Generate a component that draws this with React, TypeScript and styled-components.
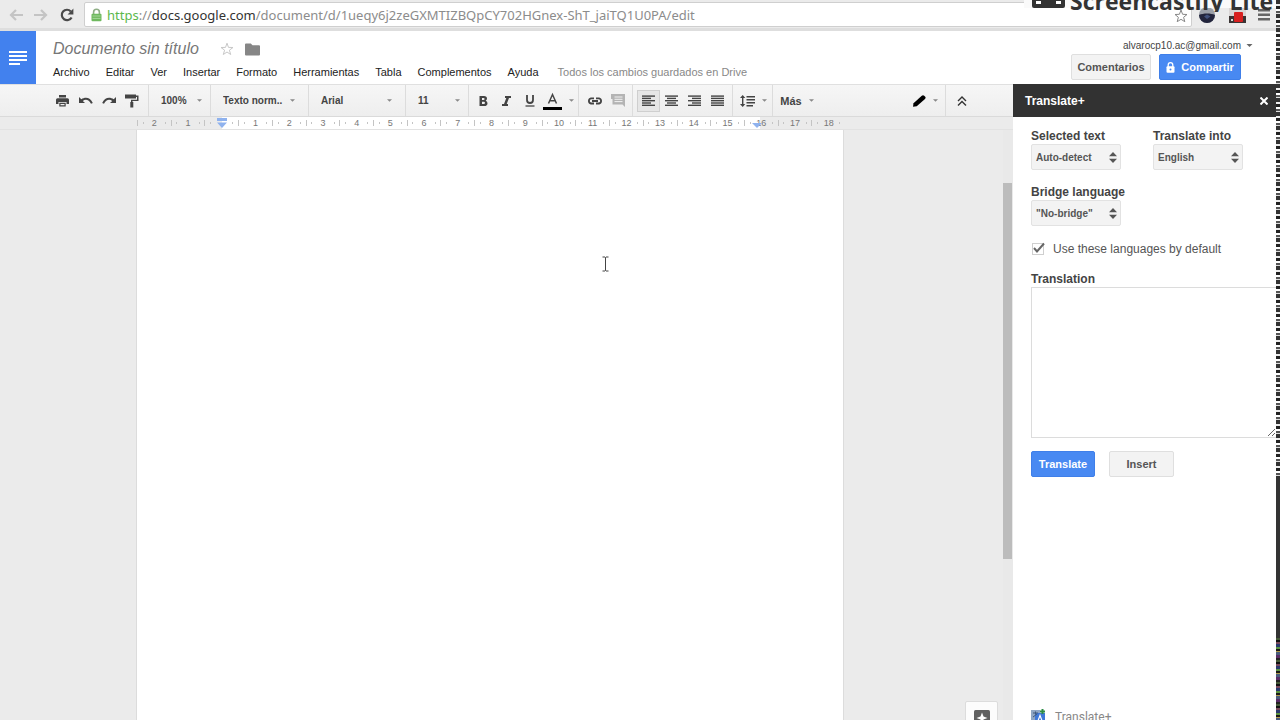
import React from "react";
import styled, { createGlobalStyle, css } from "styled-components";

const GlobalStyle = createGlobalStyle`
  *, *::before, *::after { box-sizing: border-box; }
  body {
    margin: 0;
    background: #fff;
    color: #333;
    font-family: "Liberation Sans", Arial, sans-serif;
    font-size: 11px;
  }
  button, select, input, textarea { font: inherit; color: inherit; }
`;

const Screen = styled.div`
  display: flex;
  height: 100vh;
  min-height: 480px;
  overflow: hidden;
`;

const Window = styled.div`
  flex: 1;
  min-width: 0;
  display: flex;
  flex-direction: column;
`;

const NoiseEdge = styled.div`
  flex: 0 0 4px;
  display: flex;
  flex-direction: column;
`;

const Stripes = styled.div`
  flex: 480;
  background: repeating-linear-gradient(#333 0 4px, #eee 4px 6px, #222 6px 9px, #fff 9px 11px, #555 11px 13px, #ddd 13px 14px);
`;

const DarkBand = styled.div`
  flex: 158;
  background: #333;
`;

const ColorNoise = styled.div`
  flex: 82;
  background: repeating-linear-gradient(#465a38 0 2px, #111 2px 4px, #7a4a5c 4px 6px, #2b3a6e 6px 9px, #5d9440 9px 11px, #1a1a1a 11px 13px, #b0994a 13px 14px, #4a5c7c 14px 17px, #5a2d66 17px 20px, #222 20px 22px);
`;

/* Browser bar */

const BrowserBar = styled.header`
  position: relative;
  flex: 0 0 31px;
  display: flex;
  align-items: flex-start;
  padding: 2px 0 0 4px;
  background: #ebebeb;
  border-bottom: 3px solid #dedede;
`;

const ChromeButton = styled.button<{ $w?: number }>`
  flex: 0 0 auto;
  width: ${(p) => p.$w ?? 26}px;
  height: 26px;
  padding: 0;
  border: 0;
  background: none;
  display: flex;
  align-items: center;
  justify-content: center;
`;

const AddressBox = styled.div`
  flex: 1;
  min-width: 0;
  height: 25px;
  display: flex;
  align-items: center;
  gap: 4px;
  padding: 0 2px 0 5px;
  background: #fff;
  border: 1px solid #cfcfcf;
  border-radius: 2px;
`;

const Url = styled.a`
  flex: 1;
  font: 13px/20px "Noto Sans", sans-serif;
  color: #8c8c8c;
  text-decoration: none;
  white-space: nowrap;
`;

const Secure = styled.span`
  color: #5cb84c;
`;

const Host = styled.span`
  color: #333;
`;

const Watermark = styled.div`
  position: absolute;
  top: 0;
  right: 0;
  height: 12px;
  padding: 0 3px 0 8px;
  overflow: hidden;
  display: flex;
  align-items: flex-end;
  gap: 5px;
  background: linear-gradient(#fafafa 8px, transparent 8px);
`;

const WatermarkText = styled.span`
  font: bold 23px/22px "Open Sans", sans-serif;
  color: #333;
`;

/* Document header */

const DocHeader = styled.div`
  flex: 0 0 53px;
  display: flex;
  background: #fff;
`;

const HomeLink = styled.a`
  flex: 0 0 36px;
  display: flex;
  align-items: center;
  justify-content: center;
  background: #4281ee;
`;

const TitleBlock = styled.div`
  flex: 1;
  padding: 8px 0 0 17px;
`;

const TitleRow = styled.div`
  display: flex;
  align-items: center;
  height: 20px;
`;

const DocTitle = styled.h1`
  margin: 0 16px 0 0;
  font: italic 16px/20px "Liberation Sans", Arial, sans-serif;
  color: #777;
`;

const IconButton = styled.button`
  width: 25px;
  height: 20px;
  padding: 0;
  border: 0;
  background: none;
  display: flex;
  align-items: center;
  justify-content: center;
`;

const MenuBar = styled.nav`
  display: flex;
  align-items: center;
  gap: 16px;
  height: 25px;
`;

const MenuItem = styled.button`
  padding: 0;
  border: 0;
  background: none;
  line-height: 16px;
  color: #222;
`;

const SaveState = styled.span`
  margin-left: 3px;
  line-height: 16px;
  color: #888;
  white-space: nowrap;
`;

const Account = styled.div`
  display: flex;
  flex-direction: column;
  align-items: flex-end;
  gap: 2px;
  padding: 7px 35px 0 0;
`;

const AccountButton = styled.button`
  display: flex;
  align-items: center;
  gap: 5px;
  height: 14px;
  margin-right: -12px;
  padding: 0;
  border: 0;
  background: none;
  font-size: 10px;
  color: #444;
`;

const AccountActions = styled.div`
  display: flex;
  gap: 8px;
`;

const PushButton = styled.button<{ $primary?: boolean; $w: number }>`
  width: ${(p) => p.$w}px;
  height: 26px;
  padding: 0;
  display: flex;
  align-items: center;
  justify-content: center;
  gap: 6px;
  border: 1px solid #dfdfdf;
  border-radius: 2px;
  background: #f3f3f3;
  font-size: 11px;
  font-weight: bold;
  color: #555;
  ${(p) =>
    p.$primary &&
    css`
      border-color: #3f7fe9;
      background: #4889f2;
      color: #fff;
    `}
`;

/* Editor */

const Body = styled.div`
  flex: 1;
  min-height: 0;
  display: flex;
`;

const Editor = styled.main`
  flex: 1;
  min-width: 0;
  display: flex;
  flex-direction: column;
  background: #ebebeb;
`;

const Toolbar = styled.div`
  flex: 0 0 33px;
  display: flex;
  background: linear-gradient(#f6f6f6, #eee);
  border-top: 1px solid #e0e0e0;
  border-bottom: 1px solid #dadada;
`;

const Group = styled.div<{ $w?: number; $pad?: number; $first?: boolean }>`
  flex: 0 0 auto;
  width: ${(p) => (p.$w ? `${p.$w}px` : "auto")};
  padding-left: ${(p) => p.$pad ?? 0}px;
  display: flex;
  align-items: center;
  border-left: ${(p) => (p.$first ? "0" : "1px solid #dcdcdc")};
`;

const Spacer = styled.div`
  flex: 1;
`;

const ToolButton = styled.button<{ $on?: boolean; $w?: number }>`
  width: ${(p) => p.$w ?? 23}px;
  height: 22px;
  padding: 0;
  display: flex;
  align-items: center;
  justify-content: center;
  gap: 7px;
  border: 1px solid ${(p) => (p.$on ? "#cfcfcf" : "transparent")};
  background: ${(p) => (p.$on ? "#e6e6e6" : "none")};
  font-weight: bold;
  color: #444;
`;

const SelectWrap = styled.span`
  position: relative;
  display: flex;
  width: 100%;
`;

const ToolSelect = styled.select`
  appearance: none;
  width: 100%;
  height: 22px;
  padding: 0 18px 0 12px;
  border: 0;
  background: none;
  font-size: 10px;
  font-weight: bold;
  color: #444;
`;

const SelectMark = styled.span<{ $right: number }>`
  position: absolute;
  top: 0;
  bottom: 0;
  right: ${(p) => p.$right}px;
  display: flex;
  align-items: center;
  pointer-events: none;
`;

const RulerRow = styled.div`
  flex: 0 0 13px;
  display: flex;
  padding-left: 137px;
  background: #ebebeb;
  border-bottom: 1px solid #e2e2e2;
`;

const Ruler = styled.div`
  position: relative;
  width: 708px;
  display: flex;
  background: linear-gradient(90deg, #ebebeb 12%, #fff 12% 88%, #ebebeb 88%);
`;

const RulerCell = styled.span`
  flex: 1;
  display: flex;
  align-items: center;
  justify-content: space-between;
  height: 12px;
  font-size: 9px;
  color: #777;
`;

const Tick = styled.i<{ $h: number }>`
  width: 1px;
  height: ${(p) => p.$h}px;
  background: #c4c4c4;
`;

const CellNumber = styled.span`
  width: 12px;
  text-align: center;
  line-height: 12px;
`;

const RulerMark = styled.span<{ $at: string }>`
  position: absolute;
  top: 1px;
  left: ${(p) => p.$at};
  display: flex;
`;

const CanvasClip = styled.div`
  flex: 1;
  min-height: 0;
  display: flex;
  overflow: hidden;
`;

const Canvas = styled.div`
  position: relative;
  flex: 1;
  min-height: 0;
  display: flex;
  justify-content: space-between;
  padding-left: 136px;
`;

const Paper = styled.div`
  flex: 0 0 708px;
  background: #fff;
  border: 1px solid #dcdcdc;
  border-width: 0 1px;
`;

const ScrollTrack = styled.div`
  width: 10px;
  padding: 53px 1px 0 0;
  background: #e9e9e9;
`;

const ScrollThumb = styled.div`
  height: 376px;
  background: #bcbcbc;
`;

const TextCursor = styled.svg`
  position: absolute;
  left: 601px;
  top: 126px;
`;

const ExploreButton = styled.button`
  position: absolute;
  right: 15px;
  bottom: -14px;
  width: 33px;
  height: 33px;
  padding: 0;
  display: flex;
  align-items: center;
  justify-content: center;
  border: 1px solid #dcdcdc;
  border-radius: 2px;
  background: #fcfcfc;
`;

/* Add-on sidebar */

const Sidebar = styled.aside`
  flex: 0 0 263px;
  display: flex;
  flex-direction: column;
  overflow: hidden;
  background: #fff;
`;

const SidebarHeader = styled.div`
  flex: 0 0 33px;
  display: flex;
  align-items: center;
  justify-content: space-between;
  padding-left: 12px;
  background: #323232;
  color: #fff;
`;

const SidebarTitle = styled.h2`
  margin: 0;
  font-size: 12px;
  line-height: 16px;
`;

const SidebarForm = styled.form`
  display: flex;
  flex-direction: column;
  padding: 11px 0 0 18px;
`;

const FieldRow = styled.div`
  display: flex;
  gap: 32px;
  margin-bottom: 14px;
`;

const Field = styled.div`
  width: 90px;
  display: flex;
  flex-direction: column;
`;

const FieldLabel = styled.label`
  font-size: 12px;
  font-weight: bold;
  line-height: 16px;
  white-space: nowrap;
  color: #444;
`;

const PanelSelect = styled.select`
  appearance: none;
  width: 90px;
  height: 26px;
  padding: 0 16px 0 4px;
  border: 1px solid #e2e2e2;
  border-radius: 2px;
  background: #f3f3f3;
  font-size: 10px;
  font-weight: bold;
  color: #555;
`;

const CheckRow = styled.label`
  display: flex;
  align-items: center;
  height: 18px;
  margin-bottom: 13px;
  font-size: 12px;
  color: #555;
`;

const CheckInput = styled.input`
  appearance: none;
  width: 12px;
  height: 12px;
  margin: 0 9px 0 1px;
  border: 1px solid #cfcfcf;
`;

const CheckMark = styled.svg`
  position: absolute;
  left: 1px;
  top: -1px;
  pointer-events: none;
`;

const CheckWrap = styled.span`
  position: relative;
  display: flex;
`;

const Output = styled.textarea`
  height: 151px;
  margin-right: -1px;
  padding: 4px;
  border: 1px solid #dcdcdc;
  background: #fff;
  resize: vertical;
`;

const ButtonRow = styled.div`
  display: flex;
  gap: 14px;
  padding-top: 13px;
`;

const SidebarFooter = styled.footer`
  flex: 0 0 11px;
  margin-top: auto;
  padding-left: 18px;
  display: flex;
  align-items: flex-start;
  gap: 9px;
  overflow: hidden;
  font: 12px/16px Roboto, sans-serif;
  color: #888;
`;

const Caret = ({ color = "#888", size = 5 }: { color?: string; size?: number }) => (
  <svg width={size} height="3" viewBox="0 0 6 3" aria-hidden="true">
    <path d="M0 0h6L3 3z" fill={color} />
  </svg>
);

const Updown = () => (
  <svg width="8" height="11" viewBox="0 0 8 11" aria-hidden="true">
    <path d="M4 0l4 4.2H0zM4 11l4-4.2H0z" fill="#555" />
  </svg>
);

const AlignIcon = ({ rows }: { rows: [number, number][] }) => (
  <svg width="13" height="12" viewBox="0 0 13 12" aria-hidden="true">
    {rows.map(([x, w], i) => (
      <rect key={i} x={x} y={i * 2.3 + 0.4} width={w} height="1.4" fill="#444" />
    ))}
  </svg>
);

const aligns: { name: string; rows: [number, number][] }[] = [
  { name: "Izquierda", rows: [[0, 13], [0, 9], [0, 13], [0, 9], [0, 13]] },
  { name: "Centro", rows: [[0, 13], [2, 9], [0, 13], [2, 9], [0, 13]] },
  { name: "Derecha", rows: [[0, 13], [4, 9], [0, 13], [4, 9], [0, 13]] },
  { name: "Justificado", rows: [[0, 13], [0, 13], [0, 13], [0, 13], [0, 13]] },
];

const menus = ["Archivo", "Editar", "Ver", "Insertar", "Formato", "Herramientas", "Tabla", "Complementos", "Ayuda"];

const rulerLabels = ["2", "1", "", ...Array.from({ length: 18 }, (_, i) => String(i + 1))];

const ToolbarSelect = ({ label, value, mark }: { label: string; value: string; mark: number }) => (
  <SelectWrap>
    <ToolSelect aria-label={label}>
      <option>{value}</option>
    </ToolSelect>
    <SelectMark $right={mark}>
      <Caret />
    </SelectMark>
  </SelectWrap>
);

const LanguageField = ({ id, label, value }: { id: string; label: string; value: string }) => (
  <Field>
    <FieldLabel htmlFor={id}>{label}</FieldLabel>
    <SelectWrap>
      <PanelSelect id={id}>
        <option>{value}</option>
      </PanelSelect>
      <SelectMark $right={4}>
        <Updown />
      </SelectMark>
    </SelectWrap>
  </Field>
);

const Browser = () => (
  <BrowserBar>
    <ChromeButton aria-label="Atrás" $w={24}>
      <svg width="14" height="12" viewBox="0 0 14 12" fill="none" stroke="#c4c4c4" strokeWidth="2.2">
        <path d="M14 6H2M7 1L2 6l5 5" />
      </svg>
    </ChromeButton>
    <ChromeButton aria-label="Adelante">
      <svg width="14" height="12" viewBox="0 0 14 12" fill="none" stroke="#c4c4c4" strokeWidth="2.2">
        <path d="M0 6h12M7 1l5 5-5 5" />
      </svg>
    </ChromeButton>
    <ChromeButton aria-label="Recargar">
      <svg width="14" height="14" viewBox="0 0 14 14" fill="none">
        <path d="M11.6 9.4A5.2 5.2 0 1 1 10.8 3.4" stroke="#4a4a4a" strokeWidth="2.2" />
        <path d="M13.4.6v6H7.6z" fill="#4a4a4a" />
      </svg>
    </ChromeButton>
    <ChromeButton as="span" $w={4} />
    <AddressBox>
      <svg width="13" height="14" viewBox="0 0 13 14" aria-hidden="true">
        <path d="M3.6 7V4.2a2.9 2.9 0 0 1 5.8 0V7" fill="none" stroke="#8fae86" strokeWidth="1.6" />
        <rect x="1.5" y="5.8" width="10" height="7.4" rx="1" fill="#6fb95f" />
        <path d="M2.5 8h8M2.5 10.4h8" stroke="#a5d79a" strokeWidth="1" />
      </svg>
      <Url href="#">
        <Secure>https</Secure>://<Host>docs.google.com</Host>/document/d/1ueqy6j2zeGXMTIZBQpCY702HGnex-ShT_jaiTQ1U0PA/edit
      </Url>
      <svg width="16" height="18" viewBox="0 0 16 16" aria-hidden="true">
        <path d="M8 3l1.6 4.3 4.4.2-3.4 2.8 1.2 4.4L8 12.3l-3.8 2.4 1.2-4.4L2 7.500l4.400-.2z" fill="#fff" stroke="#888" />
      </svg>
    </AddressBox>
    <ChromeButton aria-label="Extensión" $w={30}>
      <svg width="18" height="18" viewBox="0 0 18 18">
        <circle cx="9" cy="9" r="8" fill="#9a9fa8" />
        <path d="M1 9a8 8 0 0 0 16 0c-4-2-12-2-16 0z" fill="#22243c" />
        <path d="M6 10.500l3-2 3.500 2L9 13z" fill="#40507c" />
      </svg>
    </ChromeButton>
    <ChromeButton aria-label="Screencastify" $w={30}>
      <svg width="17" height="16" viewBox="0 0 17 16">
        <rect width="17" height="16" rx="1" fill="#d9d5d5" />
        <path d="M0 9h17v7H0z" fill="#3b3535" />
        <rect x="5" y="5" width="9" height="10" rx="1" fill="#d8201f" />
        <path d="M2 12h2v2H2z" fill="#ddd" />
      </svg>
    </ChromeButton>
    <ChromeButton aria-label="Menú" $w={24}>
      <svg width="12" height="12" viewBox="0 0 12 12">
        <path d="M0 0h12v2.500H0zM0 4.500h12V7H0zM0 9h12v2.500H0z" fill="#666" />
      </svg>
    </ChromeButton>
    <Watermark>
      <svg width="33" height="22" viewBox="0 0 33 22" aria-hidden="true">
        <rect width="33" height="18" rx="2" fill="#333" />
        <path d="M4 11h5v3H4zM24 11h5v3h-5z" fill="#fff" />
      </svg>
      <WatermarkText>Screencastify Lite</WatermarkText>
    </Watermark>
  </BrowserBar>
);

const Header = () => (
  <DocHeader>
    <HomeLink href="#" aria-label="Documentos">
      <svg width="18" height="14" viewBox="0 0 18 14">
        <path d="M0 0h18v2H0zM0 4h18v2H0zM0 8h18v2H0zM0 12h11v2H0z" fill="#fff" />
      </svg>
    </HomeLink>
    <TitleBlock>
      <TitleRow>
        <DocTitle>Documento sin título</DocTitle>
        <IconButton aria-label="Destacar">
          <svg width="14" height="14" viewBox="0 0 14 14">
            <path d="M7 1.200l1.500 4.200 4.500.1-3.600 2.700 1.300 4.300L7 10l-3.700 2.500 1.300-4.300L1 5.500l4.500-.1z" fill="#fff" stroke="#c8c8c8" />
          </svg>
        </IconButton>
        <IconButton aria-label="Mover a carpeta">
          <svg width="15" height="13" viewBox="0 0 15 13">
            <path d="M1 .5h4.800L7.500 2.300H14q1 0 1 1V11.500q0 1-1 1H1q-1 0-1-1v-10q0-1 1-1z" fill="#868686" />
          </svg>
        </IconButton>
      </TitleRow>
      <MenuBar>
        {menus.map((m) => (
          <MenuItem key={m}>{m}</MenuItem>
        ))}
        <SaveState>Todos los cambios guardados en Drive</SaveState>
      </MenuBar>
    </TitleBlock>
    <Account>
      <AccountButton>
        alvarocp10.ac@gmail.com
        <Caret color="#666" size={7} />
      </AccountButton>
      <AccountActions>
        <PushButton $w={80}>Comentarios</PushButton>
        <PushButton $w={82} $primary>
          <svg width="9" height="11" viewBox="0 0 9 11" aria-hidden="true">
            <path d="M2.200 5V3a2.300 2.300 0 0 1 4.600 0v2" fill="none" stroke="#fff" strokeWidth="1.300" />
            <rect x=".5" y="4.300" width="8" height="6.500" rx="1" fill="#fff" />
            <circle cx="4.500" cy="7.500" r="1" fill="#4889f2" />
          </svg>
          Compartir
        </PushButton>
      </AccountActions>
    </Account>
  </DocHeader>
);

const EditorToolbar = () => (
  <Toolbar role="toolbar">
    <Group $first $w={148} $pad={51}>
      <ToolButton aria-label="Imprimir">
        <svg width="13" height="12" viewBox="0 0 13 12" fill="#444">
          <path d="M3 0h7v2.400H3zM1.500 3.200h10Q13 3.200 13 4.700V9h-2.500V7h-8v2H0V4.700q0-1.500 1.500-1.500z" />
          <path d="M3.300 7.800h6.400v3.700H3.300zM4.500 9v1.300h4V9z" fillRule="evenodd" />
        </svg>
      </ToolButton>
      <ToolButton aria-label="Deshacer">
        <svg width="14" height="9" viewBox="0 0 14 9">
          <path d="M0 1v6h6L3.800 4.900C6.500 3 10 3.500 12 7.800l1.800-.7C11.500 1.300 6.300.6 2.300 3.300z" fill="#444" />
        </svg>
      </ToolButton>
      <ToolButton aria-label="Rehacer">
        <svg width="14" height="9" viewBox="0 0 14 9">
          <path d="M14 1v6H8l2.200-2.100C7.500 3 4 3.500 2 7.800L.2 7.100C2.500 1.300 7.700.6 11.700 3.300z" fill="#444" />
        </svg>
      </ToolButton>
      <ToolButton aria-label="Copiar formato">
        <svg width="14" height="14" viewBox="0 0 14 14">
          <path d="M0 .5h11v4H0zM11 1.500h2.500V7H7.500v1.200H6V5.700h6V3h-1zM5.300 8h3v5.500h-3z" fill="#444" />
        </svg>
      </ToolButton>
    </Group>
    <Group $w={62}>
      <ToolbarSelect label="Zoom" value="100%" mark={8} />
    </Group>
    <Group $w={98}>
      <ToolbarSelect label="Estilos" value="Texto norm.." mark={13} />
    </Group>
    <Group $w={97}>
      <ToolbarSelect label="Fuente" value="Arial" mark={13} />
    </Group>
    <Group $w={63}>
      <ToolbarSelect label="Tamaño de fuente" value="11" mark={8} />
    </Group>
    <Group $w={110} $pad={3}>
      <ToolButton aria-label="Negrita">
        <svg width="9" height="10" viewBox="0 0 9 10">
          <path d="M.5 0H5q3 0 3 2.600Q8 4.100 6.700 4.700 8.500 5.200 8.500 7.200 8.500 10 5.300 10H.5zM3 1.900v2h1.500q1.100 0 1.100-1t-1.100-1zM3 5.800V8h1.800q1.200 0 1.200-1.100T4.800 5.800z" fill="#444" fillRule="evenodd" />
        </svg>
      </ToolButton>
      <ToolButton aria-label="Cursiva">
        <svg width="9" height="10" viewBox="0 0 9 10">
          <path d="M3 0h6v1.900H7L4.700 8.100H6V10H0V8.100h2L4.300 1.900H3z" fill="#444" />
        </svg>
      </ToolButton>
      <ToolButton aria-label="Subrayar">
        <svg width="10" height="12" viewBox="0 0 10 12" fill="none" stroke="#444">
          <path d="M2 0v5q0 3 3 3t3-3V0" strokeWidth="1.800" />
          <path d="M.5 11h9" strokeWidth="1.300" />
        </svg>
      </ToolButton>
      <ToolButton $w={34} aria-label="Color del texto">
        <svg width="19" height="18" viewBox="0 0 19 18">
          <path d="M5.500 11.500L9.500 2.500l4 9M7 8.800h5" fill="none" stroke="#444" strokeWidth="1.500" />
          <path d="M0 15h19v3H0z" fill="#000" />
        </svg>
        <Caret />
      </ToolButton>
    </Group>
    <Group $w={54} $pad={4}>
      <ToolButton aria-label="Insertar enlace">
        <svg width="16" height="8" viewBox="0 0 16 8" fill="none" stroke="#444" strokeWidth="1.800">
          <path d="M7 6.500H4a2.600 2.600 0 0 1 0-5.100h3M9 1.400h3a2.600 2.600 0 0 1 0 5.100H9M5 4h6" />
        </svg>
      </ToolButton>
      <ToolButton aria-label="Insertar comentario">
        <svg width="14" height="13" viewBox="0 0 14 13">
          <path d="M0 0h14v13l-2.500-2.500H1.500V5H0z" fill="#b4b4b4" />
          <path d="M3.500 3h8M3.500 5.300h8M3.500 7.600h8" stroke="#f2f2f2" />
        </svg>
      </ToolButton>
    </Group>
    <Group $w={100} $pad={4}>
      {aligns.map((a, i) => (
        <ToolButton key={a.name} $on={i === 0} aria-label={a.name}>
          <AlignIcon rows={a.rows} />
        </ToolButton>
      ))}
    </Group>
    <Group $w={40} $pad={5}>
      <ToolButton $w={31} aria-label="Interlineado">
        <svg width="15" height="12" viewBox="0 0 15 12" fill="#444">
          <path d="M2.700 0l2.600 3H3.400v6h1.900l-2.600 3L0 9h2V3H0zM6.500 1H15v1.400H6.500zM6.500 4H15v1.400H6.500zM6.500 7H15v1.400H6.500zM6.500 10H13v1.400H6.500z" />
        </svg>
        <Caret />
      </ToolButton>
    </Group>
    <Group $pad={4}>
      <ToolButton $w={40}>
        Más
        <Caret />
      </ToolButton>
    </Group>
    <Spacer />
    <Group $first>
      <ToolButton $w={40} aria-label="Modo de edición">
        <svg width="13" height="12" viewBox="0 0 13 12">
          <path d="M0 11.800l.5-3.500L8.800.8q1.200-1 2.400 0l1 1q.9 1.100-.2 2.100L3.700 11.300z" fill="#000" />
        </svg>
        <Caret />
      </ToolButton>
    </Group>
    <Group $w={68} $pad={4}>
      <ToolButton aria-label="Ocultar menús">
        <svg width="10" height="10" viewBox="0 0 10 10" fill="none" stroke="#333" strokeWidth="1.400">
          <path d="M1 5l4-4 4 4M1 9.500l4-4 4 4" />
        </svg>
      </ToolButton>
    </Group>
  </Toolbar>
);

const EditorRuler = () => (
  <RulerRow>
    <Ruler>
      {rulerLabels.map((n, i) => (
        <RulerCell key={i}>
          <Tick $h={6} />
          <Tick $h={2} />
          <CellNumber>{n}</CellNumber>
          <Tick $h={2} />
          <span />
        </RulerCell>
      ))}
      <RulerMark $at="80px">
        <svg width="10" height="11" viewBox="0 0 10 11">
          <path d="M0 0h10v3H0zM0 4.500h10L5 10z" fill="#8fb2ee" />
        </svg>
      </RulerMark>
      <RulerMark $at="615px">
        <svg width="10" height="11" viewBox="0 0 10 11">
          <path d="M0 5h10l-5 5z" fill="#8fb2ee" />
        </svg>
      </RulerMark>
    </Ruler>
  </RulerRow>
);

const TranslateSidebar = () => (
  <Sidebar>
    <SidebarHeader>
      <SidebarTitle>Translate+</SidebarTitle>
      <IconButton aria-label="Cerrar">
        <svg width="8" height="8" viewBox="0 0 8 8" stroke="#fff" strokeWidth="2">
          <path d="M.5.5l7 7M7.500.5l-7 7" />
        </svg>
      </IconButton>
    </SidebarHeader>
    <SidebarForm onSubmit={(e) => e.preventDefault()}>
      <FieldRow>
        <LanguageField id="from" label="Selected text" value="Auto-detect" />
        <LanguageField id="to" label="Translate into" value="English" />
      </FieldRow>
      <FieldRow>
        <LanguageField id="bridge" label="Bridge language" value={'"No-bridge"'} />
      </FieldRow>
      <CheckRow>
        <CheckWrap>
          <CheckInput type="checkbox" defaultChecked />
          <CheckMark width="14" height="12" viewBox="0 0 14 12">
            <path d="M2 6l3 3.500L12 1.500" fill="none" stroke="#666" strokeWidth="2" />
          </CheckMark>
        </CheckWrap>
        Use these languages by default
      </CheckRow>
      <FieldLabel htmlFor="translation">Translation</FieldLabel>
      <Output id="translation" />
      <ButtonRow>
        <PushButton $w={64} $primary>
          Translate
        </PushButton>
        <PushButton $w={65}>Insert</PushButton>
      </ButtonRow>
    </SidebarForm>
    <SidebarFooter>
      <svg width="15" height="15" viewBox="0 0 15 15" aria-hidden="true">
        <rect y="1" width="9" height="10" fill="#8fa6c4" />
        <rect x="4" y="4" width="10" height="11" fill="#3f78d8" />
        <path d="M2 4h5M4.500 2.500v3M2 8l4-3" stroke="#40597c" />
        <path d="M6.500 13L9 6.500l2.500 6.500" fill="none" stroke="#fff" strokeWidth="1.200" />
        <path d="M9 2.500h5M11.500 0v5" stroke="#2c8b45" strokeWidth="2" />
      </svg>
      Translate+
    </SidebarFooter>
  </Sidebar>
);

export default function App() {
  return (
    <>
      <GlobalStyle />
      <Screen>
        <Window>
          <Browser />
          <Header />
          <Body>
            <Editor>
              <EditorToolbar />
              <EditorRuler />
              <CanvasClip>
                <Canvas>
                  <Paper />
                  <ScrollTrack>
                    <ScrollThumb />
                  </ScrollTrack>
                  <TextCursor width="9" height="16" viewBox="0 0 9 16">
                    <path d="M1.500 1H4l.5.500L5 1h2.500M4.500 1.500v13M1.500 15H4l.5-.5.5.5h2.500" fill="none" stroke="#444" />
                  </TextCursor>
                  <ExploreButton aria-label="Explorar">
                    <svg width="16" height="16" viewBox="0 0 16 16">
                      <rect width="16" height="16" rx="1.500" fill="#606060" />
                      <path d="M8 2.500l1.500 4 4 1.500-4 1.500L8 13.500 6.500 9.500 2.500 8l4-1.500z" fill="#fff" />
                    </svg>
                  </ExploreButton>
                </Canvas>
              </CanvasClip>
            </Editor>
            <TranslateSidebar />
          </Body>
        </Window>
        <NoiseEdge>
          <Stripes />
          <DarkBand />
          <ColorNoise />
        </NoiseEdge>
      </Screen>
    </>
  );
}
